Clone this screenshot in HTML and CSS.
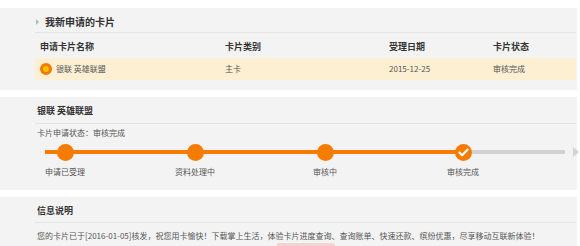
FILE: index.html
```html
<!DOCTYPE html>
<html lang="zh-CN">
<head>
    <meta charset="UTF-8">
    <meta name="viewport" content="width=device-width, initial-scale=1.0">
    <title>我新申请的卡片</title>
    <link rel="stylesheet" href="styles.css">
</head>
<body>
    <div class="panel panel-cards">
        <h2 class="panel-title with-arrow">我新申请的卡片</h2>
        <div class="card-table">
            <div class="table-row table-head">
                <span>申请卡片名称</span>
                <span>卡片类别</span>
                <span>受理日期</span>
                <span>卡片状态</span>
            </div>
            <div class="table-row table-item">
                <span class="card-name"><i class="radio"></i>银联&nbsp;英雄联盟</span>
                <span>主卡</span>
                <span>2015-12-25</span>
                <span>审核完成</span>
            </div>
        </div>
    </div>

    <div class="panel panel-progress">
        <h2 class="panel-title">银联&nbsp;英雄联盟</h2>
        <p class="status-text">卡片申请状态：审核完成</p>
        <div class="track">
            <div class="step"><span class="dot"></span></div>
            <div class="step"><span class="dot"></span></div>
            <div class="step"><span class="dot"></span></div>
            <div class="step step-last">
                <span class="dot">
                    <svg width="11" height="9" viewBox="0 0 11 9"><path d="M1.5 4.6 L4.2 7.2 L9.6 1.6" fill="none" stroke="#fff" stroke-width="2.2" stroke-linecap="round" stroke-linejoin="round"/></svg>
                </span>
            </div>
            <span class="arrow"></span>
        </div>
        <div class="track-labels">
            <div class="step">申请已受理</div>
            <div class="step">资料处理中</div>
            <div class="step">审核中</div>
            <div class="step step-last">审核完成</div>
        </div>
    </div>

    <div class="panel panel-info">
        <h2 class="panel-title">信息说明</h2>
        <p class="info-text">您的卡片已于[2016-01-05]核发，祝您用卡愉快！下载掌上生活，体验卡片进度查询、查询账单、快速还款、缤纷优惠，尽享移动互联新体验！</p>
        <div class="btn-wrap"><span class="btn" aria-label="下载"></span></div>
    </div>
</body>
</html>
```

FILE: styles.css
```css
body {
    margin: 0;
    padding-top: 8px;
    background-color: #ffffff;
    font-family: "Noto Sans CJK SC", "Noto Sans", sans-serif;
    font-size: 8px;
    color: #555555;
}

.panel {
    width: 577px;
    box-sizing: border-box;
    padding: 0 1px 10px 35px;
    background-color: #f3f3f3;
    margin-bottom: 7px;
}

.panel-title {
    margin: 0;
    padding: 2px 0 0 2px;
    line-height: 24px;
    font-size: 9px;
    font-weight: bold;
    color: #333333;
    border-bottom: 1px solid #e4e4e4;
}

.panel-cards .panel-title {
    padding: 3px 0 0;
    line-height: 21px;
    font-size: 10px;
}

.with-arrow {
    display: flex;
    align-items: center;
}

.with-arrow::before {
    content: "";
    width: 0;
    height: 0;
    border-left: 3px solid #b5b5b5;
    border-top: 3px solid transparent;
    border-bottom: 3px solid transparent;
    margin: 0 6px 0 1px;
}

/* table */
.table-row {
    display: grid;
    grid-template-columns: 185px 164px 104px 1fr;
    padding-left: 5px;
}

.table-head {
    padding-top: 3px;
    line-height: 22px;
    font-size: 9px;
    font-weight: bold;
    color: #333333;
}

.table-item {
    line-height: 22px;
    background-color: #fdefd2;
}

.card-name {
    display: flex;
    align-items: center;
}

.radio {
    width: 6px;
    height: 6px;
    border-radius: 50%;
    background-color: #f0c000;
    border: 3px solid #f57900;
    margin-right: 4px;
}

/* progress */
.status-text {
    margin: 0;
    padding-left: 2px;
    line-height: 18px;
}

.track,
.track-labels {
    display: flex;
    margin: 0 6px 0 10px;
    gap: 90px;
}

.track {
    height: 20px;
    align-items: center;
    background:
        linear-gradient(#f57c00, #f57c00) no-repeat 0 50% / 418px 4px,
        linear-gradient(#d2d2d2, #d2d2d2) no-repeat 418px 50% / 102px 4px;
}

.step {
    width: 40px;
    flex-shrink: 0;
    display: flex;
    justify-content: center;
    white-space: nowrap;
}

.step-last {
    margin-left: 8px;
}

.dot {
    width: 17px;
    height: 17px;
    border-radius: 50%;
    background-color: #f57c00;
    display: flex;
    align-items: center;
    justify-content: center;
}

.arrow {
    margin-left: auto;
    width: 0;
    height: 0;
    border-left: 6px solid #d2d2d2;
    border-top: 5px solid transparent;
    border-bottom: 5px solid transparent;
}

.track-labels {
    margin-top: 2px;
    line-height: 16px;
}

/* info */
.panel-info {
    padding-bottom: 0;
}

.panel-info .panel-title {
    line-height: 23px;
}

.info-text {
    margin: 0;
    padding: 5px 0 0 2px;
    line-height: 15px;
}

.btn-wrap {
    display: flex;
    justify-content: center;
}

.btn {
    width: 58px;
    height: 20px;
    border-radius: 2px;
    background-color: #f3d4d0;
}
```
